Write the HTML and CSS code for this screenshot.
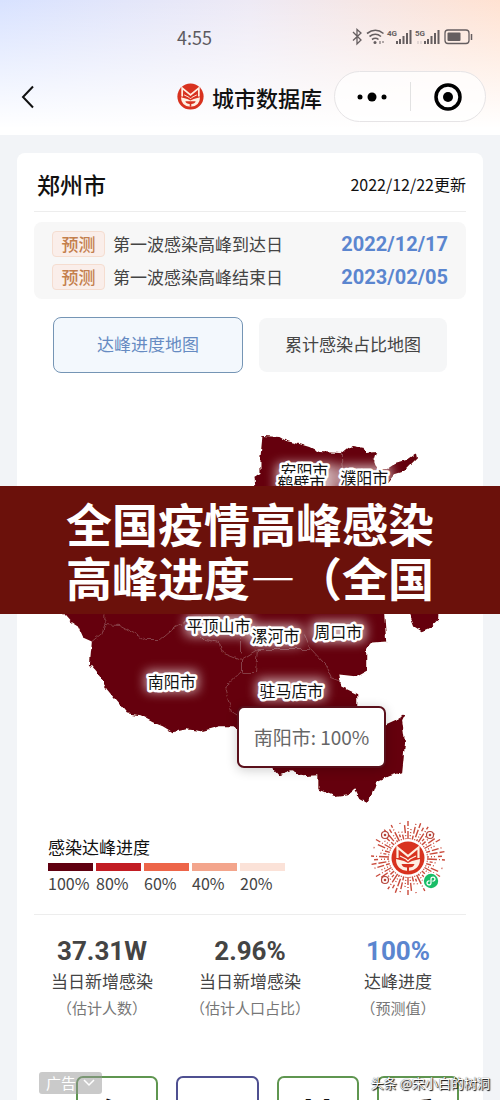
FILE: index.html
```html
<!DOCTYPE html>
<html lang="zh-CN">
<head>
    <meta charset="UTF-8">
    <meta name="viewport" content="width=device-width, initial-scale=1.0">
    <title>城市数据库</title>
    <link rel="stylesheet" href="styles.css">
</head>
<body>
    <header class="header">
        <div class="status">
            <span class="time">4:55</span>
            <svg class="status-icons" viewBox="350 26 124 22" width="124" height="22" fill="none" stroke="#655e60">
                <path d="M353 32l8 8-4 4V29.500l4 3.500-8 7.500" stroke-width="1.300"/>
                <path d="M367 33.500q8.500-6.500 16.500 0M369.500 36.500q6-4.500 11.500 0M372 39.500q3.500-2.500 6.500 0" stroke-width="1.600"/>
                <circle cx="375" cy="42.500" r="1.500" fill="#655e60" stroke="none"/>
                <path d="M380 41v3M383 41v2" stroke-width="1"/>
                <text class="net" x="387" y="36">4G</text>
                <text class="net" x="415" y="36">5G</text>
                <path d="M397 41v3M400 39v5M403.500 36v8M407 33v11M410.500 30v14" stroke-width="2"/>
                <path d="M425 41v3M428 39v5M431.500 36v8M435 33v11M438.500 30v14" stroke-width="2"/>
                <path d="M418 41v3M421 41v3" stroke="#c9bfc0" stroke-width="1"/>
                <rect x="445" y="30" width="24" height="13.500" rx="3" stroke-width="1.300"/>
                <rect x="447.500" y="32.500" width="13" height="8.500" rx="1" fill="#655e60" stroke="none"/>
                <path d="M471.500 34v6" stroke-width="1.500"/>
            </svg>
        </div>
        <nav class="nav">
            <button class="back" aria-label="返回">
                <svg viewBox="0 0 14 24" width="14" height="24" fill="none" stroke="#111" stroke-width="2"><path d="M12 1.500L2 12l10 10.500"/></svg>
            </button>
            <svg class="logo" viewBox="-17 -17 34 34" width="27" height="27">
                <g id="fox">
                    <circle r="16.500" fill="#d8321f"/>
                    <path d="M-10.500 0V-10.500L0-2 10.500-10.500V0" fill="none" stroke="#fff0e2" stroke-width="2.200"/>
                    <path d="M-8-2L-2 1 0 3 2 1 8-2" fill="none" stroke="#fff0e2" stroke-width="1.200"/>
                    <path d="M-12 1L-4 3 0 5 4 3 12 1Q12 12 0 13-12 12-12 1Z" fill="#fff0e2"/>
                    <path d="M-6.500 6H6.500Q5.500 9.500 1 9.500V13H-1V9.500Q-5.500 9.500-6.500 6Z" fill="#d8321f"/>
                </g>
            </svg>
            <h1 class="title">城市数据库</h1>
            <div class="capsule">
                <button class="capsule-btn" aria-label="更多">
                    <svg viewBox="0 0 30 10" width="30" height="10"><circle cx="3" cy="5" r="2.500"/><circle cx="15" cy="5" r="4.500"/><circle cx="27" cy="5" r="2.500"/></svg>
                </button>
                <button class="capsule-btn" aria-label="关闭">
                    <svg viewBox="0 0 28 28" width="28" height="28"><circle cx="14" cy="14" r="12" fill="none" stroke="#000" stroke-width="3.500"/><circle cx="14" cy="14" r="5"/></svg>
                </button>
            </div>
        </nav>
    </header>

    <main class="card">
        <div class="card-head">
            <h2 class="city">郑州市</h2>
            <span class="updated">2022/12/22更新</span>
        </div>

        <div class="forecast">
            <div class="forecast-row">
                <span class="tag">预测</span>
                <span>第一波感染高峰到达日</span>
                <strong class="date">2022/12/17</strong>
            </div>
            <div class="forecast-row">
                <span class="tag">预测</span>
                <span>第一波感染高峰结束日</span>
                <strong class="date">2023/02/05</strong>
            </div>
        </div>

        <div class="tabs">
            <button class="tab active">达峰进度地图</button>
            <button class="tab">累计感染占比地图</button>
        </div>

        <div class="map">
            <svg class="map-svg" viewBox="34 420 433 390">
                <defs>
                    <filter id="rough" x="-5%" y="-5%" width="110%" height="110%">
                        <feTurbulence type="fractalNoise" baseFrequency="0.13" numOctaves="2" seed="4"/>
                        <feDisplacementMap in="SourceGraphic" scale="5" xChannelSelector="R" yChannelSelector="G"/>
                    </filter>
                    <filter id="glow" x="-40%" y="-120%" width="180%" height="340%">
                        <feGaussianBlur stdDeviation="6"/>
                    </filter>
                    <clipPath id="land">
                        <use href="#province"/>
                    </clipPath>
                </defs>
                <g filter="url(#rough)">
                    <path id="province" fill="#650009" d="M263 436L280 437 287 441 300 444 310 447 320 452 342 453 348 448 354 446 365 448 367 453 378 452 375 462 378 470 388 469 397 463 407 460 417 453 418 458 412 464 403 473 394 476 386 486 370 500 390 530 400 560 440 600 439 620 430 629 423 632 415 627 410 614 390 600 385 614 387 642 373 643 367 650 367 672 358 677 340 675 342 687 358 695 358 707 387 725 398 720 406 715 403 721 406 743 403 773 390 777 377 783 372 797 367 804 360 800 355 790 348 795 335 797 318 790 318 776 303 777 292 772 280 776 273 768 238 731 233 727 220 727 202 732 187 730 173 733 163 727 153 723 140 716 127 714 117 702 107 690 100 677 90 665 92 642 83 638 78 627 70 622 63 614 70 590 200 540 256 488 255 477 261 473 261 457Z"/>
                    <path fill="none" stroke="#88404a" stroke-width="1" d="M92 642L102 634 105 625 120 626 145 640 160 640 172 630 190 620M105 625V614M190 625L205 640 220 643 222 652 242 660 242 672 225 688 232 712 238 716M242 660L258 650 278 650 312 650 326 665 332 678 342 682M258 650L256 673 242 673M312 650L305 635M242 640V655M342 453L344 486"/>
                </g>
                <g clip-path="url(#land)">
                    <g fill="#fff" opacity="0.700" filter="url(#glow)">
                        <rect x="277" y="464" width="60" height="34"/>
                        <rect x="340" y="466" width="52" height="22"/>
                        <rect x="186" y="616" width="66" height="20"/>
                        <rect x="250" y="626" width="52" height="20"/>
                        <rect x="312" y="622" width="54" height="20"/>
                        <rect x="146" y="672" width="52" height="20"/>
                        <rect x="258" y="680" width="68" height="20"/>
                    </g>
                </g>
                <g class="places">
                    <text x="305" y="477">安阳市</text>
                    <text x="302" y="489">鹤壁市</text>
                    <text x="365" y="484">濮阳市</text>
                    <text x="219" y="633">平顶山市</text>
                    <text x="276" y="643">漯河市</text>
                    <text x="339" y="639">周口市</text>
                    <text x="172" y="689">南阳市</text>
                    <text x="292" y="698">驻马店市</text>
                </g>
            </svg>
            <div class="tooltip">南阳市: 100%</div>
        </div>

        <div class="legend-row">
            <div class="legend">
                <h3 class="legend-title">感染达峰进度</h3>
                <ul class="scale">
                    <li class="step s100">100%</li>
                    <li class="step s80">80%</li>
                    <li class="step s60">60%</li>
                    <li class="step s40">40%</li>
                    <li class="step s20">20%</li>
                </ul>
            </div>
            <svg class="qr" viewBox="-38 -38 76 76" width="76" height="76">
                <defs>
                    <g id="rays" fill="none" stroke="#c94a3b" stroke-width="1.400">
                        <path d="M0-19V-27M0-29V-30M0-32V-37"/>
                        <path transform="rotate(6)" d="M0-19V-20M0-22V-23M0-25V-26M0-28V-29"/>
                        <path transform="rotate(13)" d="M0-19V-23M0-25V-32M0-34V-35"/>
                        <path transform="rotate(20)" d="M0-19V-20M0-22V-30M0-32V-37"/>
                        <path transform="rotate(27)" d="M0-19V-21M0-23V-24M0-26V-27M0-30V-34"/>
                        <path transform="rotate(33)" d="M0-19V-29M0-31V-32M0-34V-37"/>
                        <path transform="rotate(40)" d="M0-19V-20M0-22V-25M0-27V-28"/>
                        <path transform="rotate(47)" d="M0-19V-24M0-26V-27M0-35V-36"/>
                        <path transform="rotate(54)" d="M0-19V-20M0-22V-23M0-25V-33"/>
                    </g>
                </defs>
                <use href="#rays"/>
                <use href="#rays" transform="rotate(60)"/>
                <use href="#rays" transform="rotate(120)"/>
                <use href="#rays" transform="rotate(180)"/>
                <use href="#rays" transform="rotate(240)"/>
                <use href="#rays" transform="rotate(300)"/>
                <g fill="#fff" stroke="#b5453a" stroke-width="1.200">
                    <circle cx="-23" cy="-23" r="3.500"/><circle cx="22" cy="-23" r="3.500"/><circle cx="-23" cy="22" r="3.500"/>
                </g>
                <g fill="#b5453a"><circle cx="-23" cy="-23" r="1.300"/><circle cx="22" cy="-23" r="1.300"/><circle cx="-23" cy="22" r="1.300"/></g>
                <use href="#fox"/>
                <circle cx="23" cy="23" r="8.500" fill="#fff"/>
                <circle cx="23" cy="23" r="7.200" fill="#19bd67"/>
                <path d="M21.500 23a2 2 0 1 0 1.500 2v-4a2 2 0 1 1 1.500 2" fill="none" stroke="#fff" stroke-width="1.300"/>
            </svg>
        </div>

        <div class="stats">
            <div class="stat">
                <strong class="num">37.31W</strong>
                <span class="label">当日新增感染</span>
                <span class="note">（估计人数）</span>
            </div>
            <div class="stat">
                <strong class="num">2.96%</strong>
                <span class="label">当日新增感染</span>
                <span class="note">（估计人口占比）</span>
            </div>
            <div class="stat">
                <strong class="num blue">100%</strong>
                <span class="label">达峰进度</span>
                <span class="note">（预测值）</span>
            </div>
        </div>

        <div class="ads">
            <div class="ad green">每</div>
            <div class="ad navy">一</div>
            <div class="ad green">其</div>
            <div class="ad green">重</div>
        </div>
        <button class="ad-tag">广告
            <svg viewBox="0 0 12 8" width="12" height="8" fill="none" stroke="#fff" stroke-width="1.500"><path d="M1 1l5 5 5-5"/></svg>
        </button>
    </main>

    <div class="banner">全国疫情高峰感染<br>高峰进度—（全国</div>
    <div class="watermark">头条 @宋小白的树洞</div>
</body>
</html>
```
FILE: styles.css
```css
* {
    box-sizing: border-box;
}
body {
    position: relative;
    margin: 0;
    background-color: #f2f4f7;
    color: #444;
    font-family: "Noto Sans CJK SC", sans-serif;
    font-size: 17px;
    line-height: 26px;
}
h1, h2, h3, ul {
    margin: 0;
    padding: 0;
}
button {
    padding: 0;
    border: 0;
    background: none;
    color: inherit;
    font: inherit;
}
svg {
    display: block;
}

.header {
    height: 135px;
    padding-top: 26px;
    background: linear-gradient(to bottom, rgba(255, 255, 255, 0), #fff 95%), linear-gradient(to right, #d8e2ff, #eeeaf5 50%, #ffe2d2);
}
.status {
    display: flex;
    justify-content: space-between;
    align-items: center;
    height: 22px;
    padding: 0 26px 0 177px;
}
.time {
    color: #5c5a60;
    font-size: 18px;
}
.net {
    fill: #655e60;
    stroke: none;
    font: bold 8px Roboto, sans-serif;
}
.nav {
    display: flex;
    align-items: center;
    margin-top: 23px;
    padding: 0 14px 0 21px;
}
.back {
    margin-right: auto;
}
.logo {
    margin-right: 8px;
}
.title {
    margin-right: 12px;
    color: #111;
    font-size: 22px;
    font-weight: 500;
}
.capsule {
    display: flex;
    width: 152px;
    height: 51px;
    padding: 10px 0;
    border: 1px solid #e6e4e6;
    border-radius: 26px;
    background-color: rgba(255, 255, 255, 0.7);
}
.capsule-btn {
    flex: 1;
    display: flex;
    justify-content: center;
    align-items: center;
}
.capsule-btn + .capsule-btn {
    border-left: 1px solid #e2e2e2;
}

.card {
    position: relative;
    margin: 18px 17px 0;
    padding: 0 17px;
    border-radius: 8px 8px 0 0;
    background-color: #fff;
}
.card-head {
    display: flex;
    justify-content: space-between;
    align-items: center;
    height: 59px;
    padding: 4px 0 0 3px;
    border-bottom: 1px solid #ededed;
    color: #111;
}
.city {
    font-size: 23px;
    font-weight: 500;
}
.updated {
    font-size: 16px;
}
.forecast {
    display: grid;
    gap: 7px;
    margin-top: 10px;
    padding: 9px 18px;
    border-radius: 8px;
    background-color: #f7f7f7;
}
.forecast-row {
    display: flex;
    align-items: center;
    gap: 8px;
    line-height: 24px;
}
.tag {
    width: 53px;
    border: 1px solid #f5ddd0;
    border-radius: 4px;
    background-color: #faeeea;
    color: #c47f4d;
    font-weight: 500;
    text-align: center;
}
.date {
    margin-left: auto;
    color: #5b86cf;
    font-family: Roboto, sans-serif;
    font-size: 20px;
}
.tabs {
    display: flex;
    align-items: center;
    gap: 16px;
    margin-top: 18px;
    padding: 0 19px;
}
.tab {
    flex: 1;
    height: 54px;
    padding-bottom: 2px;
    border-radius: 8px;
    background-color: #f5f6f7;
}
.tab.active {
    height: 56px;
    border: 1px solid #7595b5;
    background-color: #f3f8fd;
    color: #668bc2;
}

.map {
    position: relative;
    margin-top: 47px;
}
.map-svg {
    width: 100%;
}
.places {
    fill: #111;
    stroke: #fff;
    stroke-width: 5px;
    stroke-linejoin: round;
    paint-order: stroke;
    font-size: 16px;
    text-anchor: middle;
}
.tooltip {
    position: absolute;
    left: 47%;
    top: 286px;
    width: 149px;
    border: 2px solid #5a101b;
    border-radius: 7px;
    background-color: #fff;
    box-shadow: 0 2px 12px rgba(0, 0, 0, 0.2);
    color: #666;
    font-size: 19px;
    line-height: 58px;
    text-align: center;
}

.legend-row {
    display: flex;
    justify-content: space-between;
    align-items: center;
    height: 106px;
    padding: 0 20px 8px 14px;
    border-bottom: 1px solid #ededed;
}
.legend {
    padding-top: 14px;
}
.legend-title {
    color: #111;
    font-size: 17px;
    font-weight: 400;
}
.scale {
    display: flex;
    gap: 3px;
    margin-top: 3px;
    list-style: none;
}
.step {
    width: 45px;
    border-top: 8px solid;
    font-size: 16px;
    line-height: 25px;
}
.s100 {
    border-color: #5f0010;
}
.s80 {
    border-color: #c21d23;
}
.s60 {
    border-color: #ed6549;
}
.s40 {
    border-color: #f3a58c;
}
.s20 {
    border-color: #fbe2d8;
}

.stats {
    display: grid;
    grid-template-columns: 136px 1fr 136px;
    height: 161px;
    padding-top: 20px;
}
.stat {
    display: flex;
    flex-direction: column;
    align-items: center;
}
.num {
    font-family: Roboto, sans-serif;
    font-size: 26px;
    line-height: 32px;
}
.num.blue {
    color: #5b86cf;
}
.label {
    line-height: 28px;
}
.note {
    color: #777;
    font-size: 15px;
    line-height: 26px;
}

.ads {
    display: grid;
    grid-template-columns: repeat(4, 1fr);
    gap: 18px;
    height: 24px;
    padding: 0 7px 0 42px;
    overflow: hidden;
}
.ad {
    height: 82px;
    border: 2px solid;
    border-radius: 7px;
    font-size: 42px;
    font-weight: 700;
    line-height: 78px;
    text-align: center;
}
.green {
    border-color: #5f9650;
}
.navy {
    border-color: #4f5091;
}
.ad::first-letter {
    color: #111;
}
.ad-tag {
    position: absolute;
    left: 22px;
    bottom: 6px;
    display: flex;
    align-items: center;
    gap: 7px;
    padding: 0 7px;
    border-radius: 3px;
    background-color: rgba(150, 150, 150, 0.5);
    color: #fff;
    font-size: 15px;
    line-height: 22px;
}

.banner {
    position: absolute;
    top: 486px;
    left: 0;
    right: 0;
    padding: 9px 0 11px;
    background-color: #6b110b;
    color: #fff;
    font-size: 46px;
    font-weight: 700;
    line-height: 54px;
    text-align: center;
}
.watermark {
    position: absolute;
    right: 10px;
    bottom: 4px;
    color: #fff;
    font-size: 13px;
    text-shadow: 1px 1px 1px #000, 0 0 1px #333;
}
```
